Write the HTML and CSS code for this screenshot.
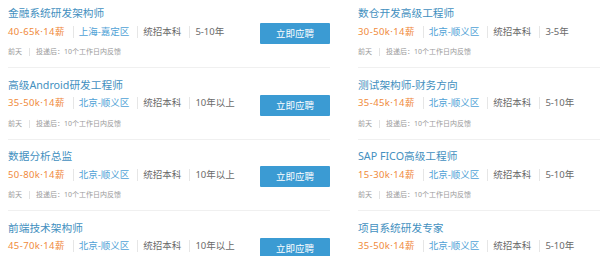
FILE: index.html
```html
<!DOCTYPE html>
<html lang="zh-CN">
<head>
<meta charset="utf-8">
<title>职位列表</title>
<link rel="stylesheet" href="styles.css">
</head>
<body>
<div class="list">
  <div class="job">
    <div class="info">
      <div class="title">金融系统研发架构师</div>
      <div class="meta"><span class="seg salary">40-65k·14薪</span><span class="seg loc">上海-嘉定区</span><span class="seg">统招本科</span><span class="seg">5-10年</span></div>
      <div class="foot"><span class="fseg">前天</span><span class="fseg">投递后：10个工作日内反馈</span></div>
    </div>
    <a class="btn">立即应聘</a>
  </div>
  <div class="job">
    <div class="info">
      <div class="title">数仓开发高级工程师</div>
      <div class="meta"><span class="seg salary">30-50k·14薪</span><span class="seg loc">北京-顺义区</span><span class="seg">统招本科</span><span class="seg">3-5年</span></div>
      <div class="foot"><span class="fseg">前天</span><span class="fseg">投递后：10个工作日内反馈</span></div>
    </div>
  </div>
  <div class="job">
    <div class="info">
      <div class="title">高级Android研发工程师</div>
      <div class="meta"><span class="seg salary">35-50k·14薪</span><span class="seg loc">北京-顺义区</span><span class="seg">统招本科</span><span class="seg">10年以上</span></div>
      <div class="foot"><span class="fseg">前天</span><span class="fseg">投递后：10个工作日内反馈</span></div>
    </div>
    <a class="btn">立即应聘</a>
  </div>
  <div class="job">
    <div class="info">
      <div class="title">测试架构师-财务方向</div>
      <div class="meta"><span class="seg salary">35-45k·14薪</span><span class="seg loc">北京-顺义区</span><span class="seg">统招本科</span><span class="seg">5-10年</span></div>
      <div class="foot"><span class="fseg">前天</span><span class="fseg">投递后：10个工作日内反馈</span></div>
    </div>
  </div>
  <div class="job">
    <div class="info">
      <div class="title">数据分析总监</div>
      <div class="meta"><span class="seg salary">50-80k·14薪</span><span class="seg loc">北京-顺义区</span><span class="seg">统招本科</span><span class="seg">10年以上</span></div>
      <div class="foot"><span class="fseg">前天</span><span class="fseg">投递后：10个工作日内反馈</span></div>
    </div>
    <a class="btn">立即应聘</a>
  </div>
  <div class="job">
    <div class="info">
      <div class="title">SAP FICO高级工程师</div>
      <div class="meta"><span class="seg salary">15-30k·14薪</span><span class="seg loc">北京-顺义区</span><span class="seg">统招本科</span><span class="seg">5-10年</span></div>
      <div class="foot"><span class="fseg">前天</span><span class="fseg">投递后：10个工作日内反馈</span></div>
    </div>
  </div>
  <div class="job">
    <div class="info">
      <div class="title">前端技术架构师</div>
      <div class="meta"><span class="seg salary">45-70k·14薪</span><span class="seg loc">北京-顺义区</span><span class="seg">统招本科</span><span class="seg">10年以上</span></div>
      <div class="foot"><span class="fseg">前天</span><span class="fseg">投递后：10个工作日内反馈</span></div>
    </div>
    <a class="btn">立即应聘</a>
  </div>
  <div class="job">
    <div class="info">
      <div class="title">项目系统研发专家</div>
      <div class="meta"><span class="seg salary">35-50k·14薪</span><span class="seg loc">北京-顺义区</span><span class="seg">统招本科</span><span class="seg">5-10年</span></div>
      <div class="foot"><span class="fseg">前天</span><span class="fseg">投递后：10个工作日内反馈</span></div>
    </div>
  </div>
</div>
</body>
</html>
```
FILE: styles.css
```css
html, body {
  margin: 0;
  padding: 0;
  overflow: hidden;
  background: #ffffff;
}
body {
  font-family: "Noto Sans", "Noto Sans CJK SC", sans-serif;
  color: #666666;
}
.list {
  display: grid;
  grid-template-columns: 322px 242px;
  column-gap: 28px;
  padding-left: 8px;
  margin-top: -3.5px;
}
.job {
  display: flex;
  align-items: flex-start;
  justify-content: space-between;
  padding: 7.5px 0 8px;
  border-bottom: 1px solid #f0f0f0;
}
.title {
  font-size: 10.7px;
  line-height: 18px;
  color: #4390c0;
  white-space: nowrap;
}
.meta {
  display: flex;
  align-items: center;
  height: 19px;
  font-size: 9.5px;
  white-space: nowrap;
}
.seg {
  line-height: 12px;
  color: #6a6a6a;
}
.seg + .seg {
  border-left: 1px solid #e6e6e6;
  margin-left: 8px;
  padding-left: 5px;
}
.salary {
  color: #f0893a;
  letter-spacing: 0.4px;
}
.loc { color: #4fa2d6; }
.foot {
  display: flex;
  align-items: center;
  margin-top: 4px;
  height: 14px;
  font-size: 7px;
  color: #9a9a9a;
  white-space: nowrap;
}
.fseg { line-height: 8px; }
.fseg + .fseg {
  border-left: 1px solid #e3e3e3;
  margin-left: 7px;
  padding-left: 6px;
}
.btn {
  display: block;
  margin-top: 19px;
  width: 70px;
  height: 21px;
  line-height: 21px;
  text-align: center;
  font-size: 9.5px;
  color: #ffffff;
  background: #3b9bd3;
  border-radius: 1px;
}
```
